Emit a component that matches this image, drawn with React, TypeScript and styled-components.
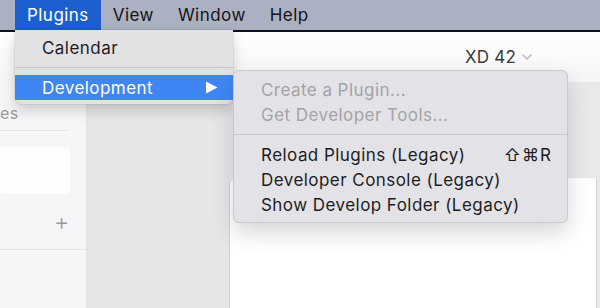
import React from 'react';
import styled, { createGlobalStyle } from 'styled-components';

const GlobalStyle = createGlobalStyle`
  html, body {
    margin: 0;
    padding: 0;
    width: 600px;
    height: 308px;
    overflow: hidden;
    background: #ffffff;
  }
  body {
    font-family: 'Inter', 'Noto Sans', sans-serif;
    letter-spacing: 0.45px;
    -webkit-font-smoothing: antialiased;
  }
`;

// Screen + menu bar
const Screen = styled.div`
  position: relative;
  width: 600px;
  height: 308px;
  display: flex;
  flex-direction: column;
  overflow: hidden;
`;

const MenuBar = styled.div`
  height: 30px;
  background: #abb1c3;
  display: flex;
  align-items: stretch;
  padding-left: 15px;
  border-bottom: 2px solid #0e1120;
`;

const MenuTitle = styled.div<{ $active?: boolean }>`
  display: flex;
  align-items: center;
  padding: 0 12px;
  font-size: 17px;
  color: ${({ $active }) => ($active ? '#ffffff' : '#141414')};
  background: ${({ $active }) => ($active ? '#1d5fcf' : 'transparent')};
`;

// Background app window
const AppWindow = styled.div`
  flex: 1;
  display: flex;
  flex-direction: column;
  min-height: 0;
`;

const Header = styled.div`
  height: 50px;
  background: linear-gradient(#ffffff, #f5f5f7);
  display: flex;
  justify-content: flex-end;
  align-items: center;
  padding-right: 67px;
  gap: 5px;
`;

const VersionLabel = styled.span`
  font-size: 17px;
  letter-spacing: 0.2px;
  color: #3a3a3c;
`;

const Body = styled.div`
  flex: 1;
  display: flex;
  min-height: 0;
`;

const Sidebar = styled.div`
  width: 86px;
  background: #f6f6f8;
  border-right: 1px solid #e2e2e4;
  display: flex;
  flex-direction: column;
`;

const SidebarLabel = styled.div`
  height: 49px;
  margin-right: 18px;
  padding: 0 0 7px 0;
  border-bottom: 1px solid #e4e4e6;
  display: flex;
  align-items: flex-end;
  box-sizing: border-box;
  font-size: 16px;
  color: #9a9a9e;
  white-space: nowrap;
`;

const SidebarCard = styled.div`
  height: 47px;
  margin: 16px 16px 0 0;
  background: #fdfdfe;
  border-radius: 3px;
`;

const AddRow = styled.div`
  height: 55px;
  display: flex;
  align-items: center;
  justify-content: flex-end;
  padding-right: 16px;
  border-bottom: 1px solid #e4e4e6;
  font-size: 24px;
  font-weight: 300;
  color: #9b9b9f;
`;

const MiddleColumn = styled.div`
  width: 142px;
  background: #e6e6e8;
`;

const RightArea = styled.div`
  flex: 1;
  display: flex;
  flex-direction: column;
  background: #e9e9eb;
  padding-right: 3px;
`;

const CanvasBand = styled.div`
  height: 96px;
`;

const WhitePanel = styled.div`
  flex: 1;
  background: #ffffff;
  border-left: 1px solid #d4d4d6;
  border-right: 1px solid #d4d4d6;
  border-top-left-radius: 6px;
`;

// Menus (overlays)
const Dropdown = styled.div`
  position: absolute;
  left: 15px;
  top: 30px;
  width: 218px;
  padding: 5px 0 4px;
  background: #e2e2e5;
  border-radius: 0 0 6px 6px;
  box-shadow: 0 6px 14px rgba(0, 0, 0, 0.18), 0 0 0 0.5px rgba(0, 0, 0, 0.12);
  box-sizing: border-box;
`;

const SubMenu = styled.div`
  position: absolute;
  left: 233px;
  top: 70px;
  width: 335px;
  padding: 6px 0 5px;
  background: #e3e3e7;
  border-radius: 6px;
  border: 1px solid #c9c9cd;
  box-shadow: 0 10px 22px rgba(0, 0, 0, 0.16);
  box-sizing: border-box;
`;

const Item = styled.div<{ $highlighted?: boolean; $disabled?: boolean }>`
  height: 25px;
  display: flex;
  align-items: center;
  justify-content: space-between;
  padding: 0 15px 0 27px;
  font-size: 17px;
  color: ${({ $highlighted, $disabled }) =>
    $highlighted ? '#ffffff' : $disabled ? '#a3a3a8' : '#1d1d1f'};
  background: ${({ $highlighted }) => ($highlighted ? '#3f86f5' : 'transparent')};
  white-space: nowrap;
`;

const Separator = styled.div<{ $space: number }>`
  height: 1px;
  background: #c6c6cb;
  margin: ${({ $space }) => `${$space}px 0`};
`;

const Shortcut = styled.span`
  font-size: 17px;
  letter-spacing: 1px;
  color: #1d1d1f;
`;

const Chevron = () => (
  <svg width="12" height="8" viewBox="0 0 12 8">
    <path d="M1.5 1.5 L6 6 L10.5 1.5" fill="none" stroke="#b8b8bc" strokeWidth="1.4" />
  </svg>
);

const RightTriangle = () => (
  <svg width="13" height="13" viewBox="0 0 13 13">
    <path d="M1 0.5 L12.5 6.5 L1 12.5 Z" fill="#ffffff" />
  </svg>
);

const menus = ['Plugins', 'View', 'Window', 'Help'];

const subItems = [
  { label: 'Reload Plugins (Legacy)', shortcut: '⇧⌘R' },
  { label: 'Developer Console (Legacy)' },
  { label: 'Show Develop Folder (Legacy)' },
];

const App: React.FC = () => {
  return (
    <>
      <GlobalStyle />
      <Screen>
        <MenuBar>
          {menus.map((m, i) => (
            <MenuTitle key={m} $active={i === 0}>
              {m}
            </MenuTitle>
          ))}
        </MenuBar>

        <AppWindow>
          <Header>
            <VersionLabel>XD 42</VersionLabel>
            <Chevron />
          </Header>
          <Body>
            <Sidebar>
              <SidebarLabel>es</SidebarLabel>
              <SidebarCard />
              <AddRow>+</AddRow>
            </Sidebar>
            <MiddleColumn />
            <RightArea>
              <CanvasBand />
              <WhitePanel />
            </RightArea>
          </Body>
        </AppWindow>

        <Dropdown>
          <Item>Calendar</Item>
          <Separator $space={7} />
          <Item $highlighted>
            Development
            <RightTriangle />
          </Item>
        </Dropdown>

        <SubMenu>
          <Item $disabled>Create a Plugin...</Item>
          <Item $disabled>Get Developer Tools...</Item>
          <Separator $space={7} />
          {subItems.map((s) => (
            <Item key={s.label}>
              {s.label}
              {s.shortcut && <Shortcut>{s.shortcut}</Shortcut>}
            </Item>
          ))}
        </SubMenu>
      </Screen>
    </>
  );
};

export default App;
